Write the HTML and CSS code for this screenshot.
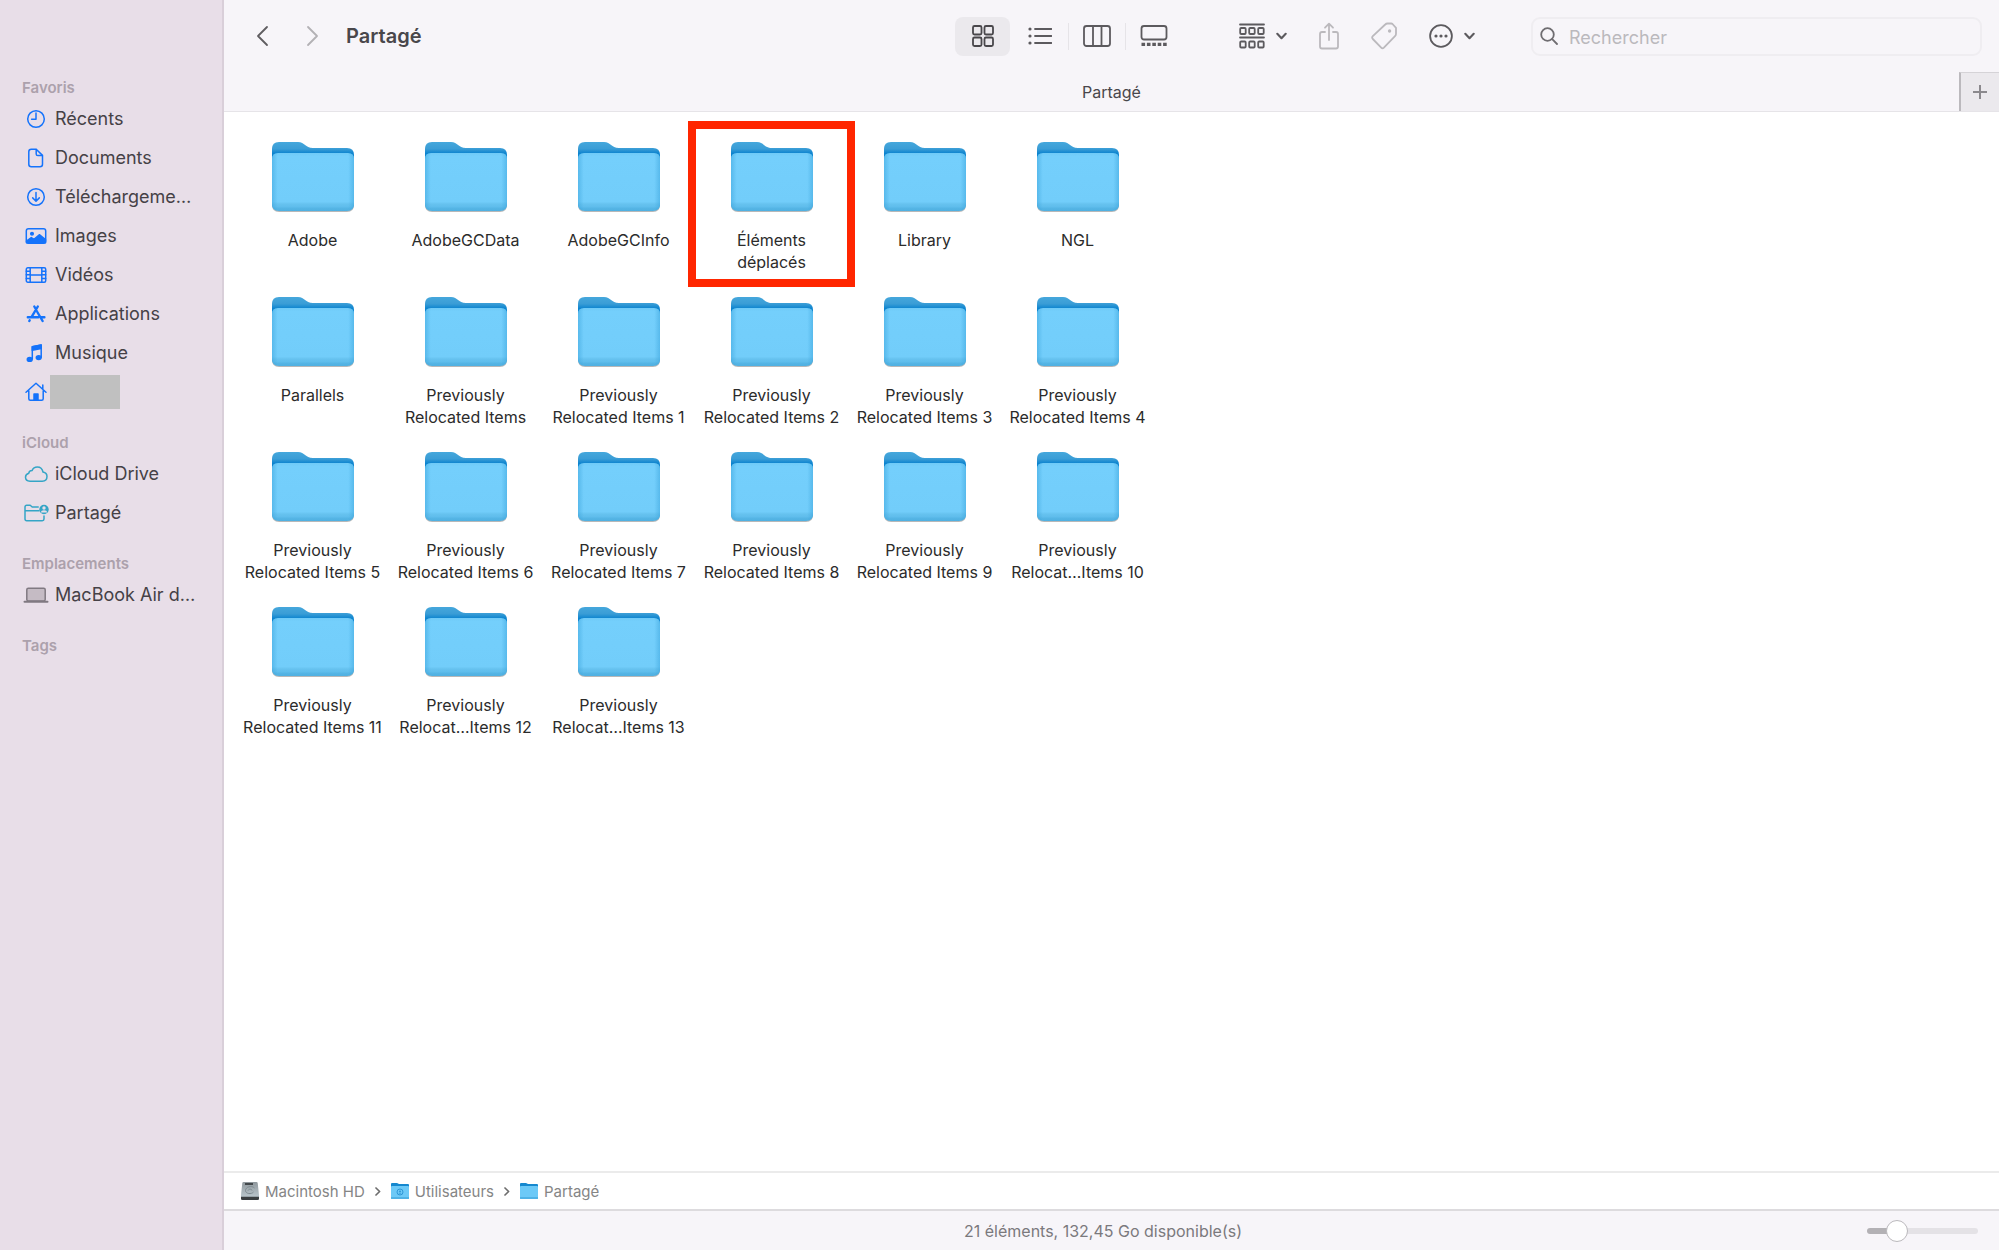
FILE: index.html
```html
<!DOCTYPE html>
<html lang="fr">
<head>
<meta charset="utf-8">
<meta name="viewport" content="width=device-width, initial-scale=1">
<title>Partagé</title>
<link rel="stylesheet" href="styles.css">
</head>
<body>
<svg class="defs" aria-hidden="true">
  <defs>
    <linearGradient id="back" x1="0" y1="0" x2="0" y2="1">
      <stop offset="0" stop-color="#45a7dc"/><stop offset=".1" stop-color="#3a9dd6"/><stop offset=".17" stop-color="#0b83cf"/><stop offset="1" stop-color="#0b83cf"/>
    </linearGradient>
    <linearGradient id="front" x1="0" y1="0" x2="0" y2="1">
      <stop offset="0" stop-color="#6fcaf7"/><stop offset=".06" stop-color="#74cffc"/><stop offset=".84" stop-color="#72cdfa"/><stop offset=".88" stop-color="#66c2ef"/><stop offset=".93" stop-color="#5fbdec"/><stop offset=".95" stop-color="#55b5e5"/><stop offset="1" stop-color="#50b0e1"/>
    </linearGradient>
    <linearGradient id="sides" x1="0" y1="0" x2="1" y2="0">
      <stop offset="0" stop-color="#3ba4dc" stop-opacity=".5"/><stop offset=".07" stop-color="#3ba4dc" stop-opacity="0"/><stop offset=".93" stop-color="#3ba4dc" stop-opacity="0"/><stop offset="1" stop-color="#3ba4dc" stop-opacity=".5"/>
    </linearGradient>
    <linearGradient id="metal" x1="0" y1="0" x2="0" y2="1">
      <stop offset="0" stop-color="#8f979c"/><stop offset="1" stop-color="#c3d0d6"/>
    </linearGradient>
  </defs>
  <symbol id="folder" viewBox="0 0 84 72">
    <path d="M1 9v54q0 7 7 7h68q7 0 7-7V16q0-8-8-8H42c-8 0-8-7-16-7H9Q1 1 1 9z" transform="translate(0 1)" fill="#000" opacity=".28"/>
    <path d="M1 8v54q0 7 7 7h68q7 0 7-7V14q0-7-7-7H42c-8 0-8-6-15-6H8Q1 1 1 8z" fill="url(#back)"/>
    <path d="M1 18q0-6 6-6h70q6 0 6 6v45q0 7-7 7H8q-7 0-7-7z" fill="url(#front)"/>
    <path d="M1 18q0-6 6-6h70q6 0 6 6v45q0 7-7 7H8q-7 0-7-7z" fill="url(#sides)"/>
  </symbol>
  <symbol id="mini-folder" viewBox="0 0 18 18">
    <path d="M0 2q0-1 1-1h5l2 1h9q1 0 1 1v13q0 1-1 1H1q-1 0-1-1z" fill="#1588cf"/>
    <path d="M0 5q0-1 1-1h16q1 0 1 1v11q0 1-1 1H1q-1 0-1-1z" fill="#6cc9f7"/>
    <path d="M0 15h18v1q0 1-1 1H1q-1 0-1-1z" fill="#4fb2e6"/>
  </symbol>
  <symbol id="down" viewBox="0 0 11 8"><path d="M1.3 1.8 5.5 6.2 9.7 1.8" fill="none" stroke="#5c5a5e" stroke-width="2.1" stroke-linecap="round" stroke-linejoin="round"/></symbol>
  <symbol id="next" viewBox="0 0 6 9"><path d="M1 1 4.6 4.5 1 8" fill="none" stroke="#6d6d6d" stroke-width="1.7" stroke-linecap="round" stroke-linejoin="round"/></symbol>
</svg>

<div class="window">
  <nav class="sidebar" aria-label="Barre latérale">
    <section>
      <h2>Favoris</h2>
      <ul>
        <li><a href="#"><svg class="side-icon" viewBox="0 0 26 22"><circle cx="13" cy="11" r="8.3"/><path d="M13 5v6.3H8.6"/></svg><span>Récents</span></a></li>
        <li><a href="#"><svg class="side-icon" viewBox="0 0 26 22"><path d="M8.3 2.2h4.9l6.3 6.2v8.9q0 2.5-2.5 2.5H8.3q-2.5 0-2.5-2.5V4.7q0-2.5 2.5-2.5z"/><path d="M13.2 2.5v4.4q0 1.7 1.7 1.7h4.3"/></svg><span>Documents</span></a></li>
        <li><a href="#"><svg class="side-icon" viewBox="0 0 26 22"><circle cx="13" cy="11" r="8.3"/><path d="M13 6.500v8.500M9.700 11.900l3.300 3.300 3.300-3.300"/></svg><span>Téléchargeme…</span></a></li>
        <li><a href="#"><svg class="side-icon" viewBox="0 0 26 22"><rect x="3.300" y="3.800" width="19.400" height="14.400" rx="2.200"/><circle class="solid" cx="9" cy="8.700" r="1.300"/><path class="solid" d="M3.500 16l4.800-3.500 2.700 1.800 5.300-4.600 6.200 5v3H3.500z"/></svg><span>Images</span></a></li>
        <li><a href="#"><svg class="side-icon" viewBox="0 0 26 22"><rect x="3.300" y="3.800" width="19.400" height="14.400" rx="1.500"/><path d="M7.200 4v14M18.800 4v14M7.200 11h11.600M3.300 7.200h3.900M3.300 10.800h3.900M3.300 14.400h3.900M18.800 7.200h3.900M18.800 10.800h3.900M18.800 14.400h3.900"/></svg><span>Vidéos</span></a></li>
        <li><a href="#"><svg class="side-icon thick" viewBox="0 0 26 22"><path d="M14.800 3.500 8.500 14.200M11.300 3.500l2.300 4M14.300 9l5.300 9M4.800 14.200h10.500M18 14.200h3.400M6.700 17.200l-.4.800"/></svg><span>Applications</span></a></li>
        <li><a href="#"><svg class="side-icon" viewBox="0 0 26 22"><path d="M9.300 17V4.700L18.200 3v12.300"/><path class="solid" d="M9.300 4.700 18.200 3v3.500L9.300 8.300z"/><ellipse class="solid" cx="6.700" cy="17.400" rx="2.400" ry="1.900"/><ellipse class="solid" cx="15.700" cy="15.600" rx="2.400" ry="1.900"/></svg><span>Musique</span></a></li>
        <li><a href="#" aria-label="Dossier de départ"><svg class="side-icon" viewBox="0 0 26 22"><path d="M3 11.200 13 2.300l10 8.900M5.800 9.500v8.200q0 1.500 1.500 1.500h11.400q1.500 0 1.500-1.500V9.500M19.800 4v4"/><path class="solid" d="M11 13h4v6h-4z"/></svg><span class="redacted"></span></a></li>
      </ul>
    </section>
    <section>
      <h2>iCloud</h2>
      <ul>
        <li><a href="#"><svg class="side-icon teal" viewBox="0 0 26 22"><path d="M7 18.300q-4.500-.2-4.500-4 0-3 3.300-4 .2-2.600 3.200-2.700 1.500-3.600 5.300-3.600 4.700 0 5.700 5 4 .8 4 4.600 0 4.500-4.800 4.700z"/></svg><span>iCloud Drive</span></a></li>
        <li><a href="#"><svg class="side-icon teal" viewBox="0 0 26 22"><path d="M21 14v3q0 1.700-1.700 1.700H3.700Q2 18.700 2 17V5q0-1.700 1.700-1.700h3.500l2 1.700h6M2 8.700h14"/><circle class="solid" cx="21" cy="7.500" r="4"/><circle class="light" cx="21" cy="6" r="1.700"/><path class="light" d="M18 10.500q0-2.300 3-2.300t3 2.300z"/></svg><span>Partagé</span></a></li>
      </ul>
    </section>
    <section>
      <h2>Emplacements</h2>
      <ul>
        <li><a href="#"><svg class="side-icon gray" viewBox="0 0 26 22"><rect x="3.800" y="4.300" width="18.400" height="12.700" rx="1.500" fill="#c5bbc4"/><path d="M1.500 17.800h23" stroke-width="2"/></svg><span>MacBook Air d…</span></a></li>
      </ul>
    </section>
    <section>
      <h2>Tags</h2>
    </section>
  </nav>

  <div class="content">
    <header class="toolbar">
      <div class="history">
        <button aria-label="Précédent"><svg width="14" height="22" viewBox="0 0 14 22"><path d="M12 2 3 11l9 9" stroke="#5f5d61"/></svg></button>
        <button aria-label="Suivant" disabled><svg width="14" height="22" viewBox="0 0 14 22"><path d="M2 2l9 9-9 9" stroke="#b3b1b5"/></svg></button>
      </div>
      <h1>Partagé</h1>
      <div class="views">
        <button class="selected" aria-label="Icônes"><svg width="24" height="24" viewBox="0 0 24 24"><rect x="2" y="2" width="8.500" height="8.500" rx="1.500"/><rect x="13.500" y="2" width="8.500" height="8.500" rx="1.500"/><rect x="2" y="13.500" width="8.500" height="8.500" rx="1.500"/><rect x="13.500" y="13.500" width="8.500" height="8.500" rx="1.500"/></svg></button>
        <button aria-label="Liste"><svg width="24" height="24" viewBox="0 0 24 24"><path d="M7 5h16.500M7 12h16.500M7 19h16.500"/><g class="dot"><circle cx="2" cy="5" r="1.600"/><circle cx="2" cy="12" r="1.600"/><circle cx="2" cy="19" r="1.600"/></g></svg></button>
        <button class="divided" aria-label="Colonnes"><svg width="28" height="24" viewBox="0 0 28 24"><rect x="1" y="2" width="26" height="20" rx="2.500"/><path d="M10 2v20M18.500 2v20"/></svg></button>
        <button class="divided" aria-label="Galerie"><svg width="28" height="24" viewBox="0 0 28 24"><rect x="1.500" y="2" width="25" height="13.500" rx="2.500"/><path d="M1.500 20.300h25.500" stroke-width="3.200" stroke-dasharray="3.600 1.800"/></svg></button>
      </div>
      <div class="actions">
        <button aria-label="Grouper"><svg width="26" height="26" viewBox="0 0 26 26"><path d="M1 1.500h24M1 14.500h24"/><g><rect x="1.200" y="5" width="5.500" height="6" rx="1"/><rect x="10.200" y="5" width="5.500" height="6" rx="1"/><rect x="19.200" y="5" width="5.500" height="6" rx="1"/><rect x="1.200" y="18.500" width="5.500" height="6" rx="1"/><rect x="10.200" y="18.500" width="5.500" height="6" rx="1"/><rect x="19.200" y="18.500" width="5.500" height="6" rx="1"/></g></svg><svg width="11" height="8"><use href="#down"/></svg></button>
        <button aria-label="Partager" disabled><svg width="20" height="28" viewBox="0 0 20 28"><path d="M6 10H3q-2 0-2 2v12.500q0 2 2 2h14q2 0 2-2V12q0-2-2-2h-3M10 18V2M6 5.700l4-4 4 4"/></svg></button>
        <button aria-label="Tags" disabled><svg width="26" height="28" viewBox="0 0 26 28"><path d="M14.200 2.500 1.800 14.200q-1.300 1.300 0 2.800l8.400 8.700q1.300 1.300 2.700 0L24 14.200q1-1 1-2.500V5.800L21.500 2q-.5-.5-1.300-.5h-3.700q-1.300 0-2.300 1z"/><circle cx="18.600" cy="9" r=".8" fill="#bbb9bd"/></svg></button>
        <button aria-label="Actions"><svg width="24" height="24" viewBox="0 0 24 24"><circle cx="12" cy="12" r="10.900"/><g class="dot"><circle cx="7" cy="12" r="1.600"/><circle cx="12" cy="12" r="1.600"/><circle cx="17" cy="12" r="1.600"/></g></svg><svg width="11" height="8"><use href="#down"/></svg></button>
      </div>
      <label class="search">
        <svg width="18" height="18" viewBox="0 0 18 18"><circle cx="7.500" cy="7.500" r="6.300"/><path d="M12.200 12.200 17 17"/></svg>
        <input type="search" placeholder="Rechercher" aria-label="Rechercher">
      </label>
    </header>

    <div class="tabs">
      <span class="tab">Partagé</span>
      <button class="new-tab" aria-label="Nouvel onglet"><svg width="16" height="16" viewBox="0 0 16 16"><path d="M8 1v14M1 8h14"/></svg></button>
    </div>

    <main>
      <ul class="files">
        <li><svg><use href="#folder"/></svg><span>Adobe</span></li>
        <li><svg><use href="#folder"/></svg><span>AdobeGCData</span></li>
        <li><svg><use href="#folder"/></svg><span>AdobeGCInfo</span></li>
        <li class="marked"><svg><use href="#folder"/></svg><span>Éléments<br>déplacés</span></li>
        <li><svg><use href="#folder"/></svg><span>Library</span></li>
        <li><svg><use href="#folder"/></svg><span>NGL</span></li>
        <li><svg><use href="#folder"/></svg><span>Parallels</span></li>
        <li><svg><use href="#folder"/></svg><span>Previously<br>Relocated Items</span></li>
        <li><svg><use href="#folder"/></svg><span>Previously<br>Relocated Items 1</span></li>
        <li><svg><use href="#folder"/></svg><span>Previously<br>Relocated Items 2</span></li>
        <li><svg><use href="#folder"/></svg><span>Previously<br>Relocated Items 3</span></li>
        <li><svg><use href="#folder"/></svg><span>Previously<br>Relocated Items 4</span></li>
        <li><svg><use href="#folder"/></svg><span>Previously<br>Relocated Items 5</span></li>
        <li><svg><use href="#folder"/></svg><span>Previously<br>Relocated Items 6</span></li>
        <li><svg><use href="#folder"/></svg><span>Previously<br>Relocated Items 7</span></li>
        <li><svg><use href="#folder"/></svg><span>Previously<br>Relocated Items 8</span></li>
        <li><svg><use href="#folder"/></svg><span>Previously<br>Relocated Items 9</span></li>
        <li><svg><use href="#folder"/></svg><span>Previously<br>Relocat…Items 10</span></li>
        <li><svg><use href="#folder"/></svg><span>Previously<br>Relocated Items 11</span></li>
        <li><svg><use href="#folder"/></svg><span>Previously<br>Relocat…Items 12</span></li>
        <li><svg><use href="#folder"/></svg><span>Previously<br>Relocat…Items 13</span></li>
      </ul>
    </main>

    <nav class="path" aria-label="Chemin">
      <a href="#"><svg width="18" height="18" viewBox="0 0 18 18"><path d="M2.500 0h13q1 0 1.200 1L18 13v3.500q0 1.500-1.500 1.500h-15Q0 18 0 16.500V13L1.300 1q.2-1 1.200-1z" fill="url(#metal)"/><path d="M0 14.800h18v1.700q0 1.500-1.500 1.500h-15Q0 18 0 16.500z" fill="#3b3f41"/><path d="M4 2h8" stroke="#43484b" stroke-width="2"/><path d="M13.500 6c-3-3-9-1-9 2.500s6 4 8 1.500M7 8.500c1-2 4-1.500 4 0" fill="none" stroke="#7f8b91"/></svg>Macintosh HD</a>
      <svg class="next" width="6" height="9"><use href="#next"/></svg>
      <a href="#"><svg width="18" height="18" viewBox="0 0 18 18"><use href="#mini-folder"/><circle cx="9" cy="10" r="3" fill="none" stroke="#2f97d6"/><circle cx="9" cy="9.500" r="1" fill="#2f97d6"/><path d="M7.300 12q1.700-1.700 3.400 0z" fill="#2f97d6"/></svg>Utilisateurs</a>
      <svg class="next" width="6" height="9"><use href="#next"/></svg>
      <a href="#"><svg width="18" height="18"><use href="#mini-folder"/></svg>Partagé</a>
    </nav>

    <footer class="status">
      <span>21 éléments, 132,45 Go disponible(s)</span>
      <input type="range" min="0" max="100" value="21" aria-label="Taille des icônes">
    </footer>
  </div>
</div>
</body>
</html>
```

FILE: styles.css
```css
* {
  box-sizing: border-box;
}

body {
  margin: 0;
  font-family: Inter, "Liberation Sans", sans-serif;
  font-size: 16px;
  color: #2b2b2b;
  background: #fff;
}

ul {
  margin: 0;
  padding: 0;
  list-style: none;
}

h1,
h2 {
  margin: 0;
}

a {
  color: inherit;
  text-decoration: none;
}

button {
  display: flex;
  align-items: center;
  justify-content: center;
  padding: 0;
  border: 0;
  background: none;
  font: inherit;
}

.defs {
  position: absolute;
  width: 0;
  height: 0;
}

.window {
  display: flex;
  min-height: 100vh;
}

/* Sidebar */
.sidebar {
  display: flex;
  flex: 0 0 224px;
  flex-direction: column;
  gap: 20px;
  padding-top: 76px;
  background: #e8dee8;
  border-right: 2px solid #d9cfd9;
}

.sidebar h2 {
  padding-left: 22px;
  font-size: 15px;
  line-height: 23px;
  font-weight: 600;
  color: #aca1ac;
}

.sidebar a {
  display: flex;
  align-items: center;
  gap: 6px;
  height: 39px;
  padding-left: 23px;
  font-size: 18px;
  white-space: nowrap;
  color: #454146;
}

.side-icon {
  flex: none;
  width: 26px;
  height: 22px;
  fill: none;
  stroke: #1573fb;
  stroke-width: 1.5;
  stroke-linecap: round;
  stroke-linejoin: round;
}

.side-icon .solid {
  fill: #1573fb;
}

.side-icon.thick {
  stroke-width: 2.4;
}

.side-icon.teal {
  stroke: #35a5c6;
}

.side-icon.teal .solid {
  fill: #35a5c6;
}

.side-icon .light {
  fill: #e8dee8;
  stroke: none;
}

.side-icon.gray {
  stroke: #807981;
}

.redacted {
  width: 70px;
  height: 34px;
  background: #c0c0c0;
  margin-left: -5px;
}

/* Toolbar */
.content {
  display: flex;
  flex: 1;
  flex-direction: column;
  min-width: 0;
}

.toolbar {
  display: flex;
  align-items: center;
  height: 72px;
  padding: 0 17px 0 31px;
  background: #f7f5f9;
}

.toolbar svg {
  fill: none;
  stroke: #5c5a5e;
  stroke-width: 1.8;
  stroke-linecap: round;
  stroke-linejoin: round;
}

.toolbar button:disabled svg {
  stroke: #bbb9bd;
}

.toolbar .dot {
  fill: #5c5a5e;
  stroke: none;
}

.history {
  display: flex;
  gap: 37px;
  margin-right: 26px;
}

.toolbar h1 {
  flex: 1;
  font-size: 20px;
  font-weight: 600;
  color: #49474b;
}

.views {
  display: flex;
  gap: 2px;
  margin-right: 58px;
}

.views button {
  position: relative;
  width: 55px;
  height: 39px;
  border-radius: 8px;
}

.views .selected {
  background: #ebe9ed;
}

.views .selected svg {
  stroke: #49474b;
}

.views .divided svg {
  stroke-linecap: butt;
}

.views .divided::before {
  content: "";
  position: absolute;
  left: -1px;
  top: 6px;
  width: 1px;
  height: 27px;
  background: #e6e4e8;
}

.actions {
  display: flex;
  gap: 32px;
  margin-right: 56px;
}

.actions button {
  gap: 11px;
}

.search {
  display: flex;
  align-items: center;
  gap: 11px;
  width: 451px;
  height: 39px;
  padding: 0 7px;
  border: 2px solid #efedf1;
  border-radius: 9px;
}

.search svg {
  flex: none;
  stroke: #6f6d71;
}

.search input {
  flex: 1;
  min-width: 0;
  padding: 2px 0 0;
  border: 0;
  outline: 0;
  background: none;
  font: inherit;
  font-size: 18px;
}

.search input::placeholder {
  color: #bbb9bd;
}

/* Tab bar */
.tabs {
  display: flex;
  align-items: stretch;
  height: 40px;
  background: #f7f5f9;
  border-bottom: 1px solid #e6e4e8;
}

.tab {
  flex: 1;
  margin-right: -40px;
  font-size: 16px;
  line-height: 40px;
  text-align: center;
  color: #49474b;
}

.new-tab {
  width: 40px;
  background: #ebe9ed;
  border-top: 1px solid #d5d3d7;
  border-left: 2px solid #bbb9bd;
}

.new-tab svg {
  stroke: #8b898d;
  stroke-width: 2;
}

/* Files */
main {
  flex: 1;
  padding: 24px 12px;
}

.files {
  display: grid;
  grid-template-columns: repeat(6, 153px);
  grid-auto-rows: 151px;
  row-gap: 4px;
}

.files li {
  position: relative;
  display: flex;
  flex-direction: column;
  align-items: center;
  gap: 16px;
  padding-top: 5px;
}

.files li svg {
  width: 84px;
  height: 72px;
}

.files span {
  line-height: 22px;
  text-align: center;
  white-space: nowrap;
}

.marked::after {
  content: "";
  position: absolute;
  inset: -15px -7px 0;
  border: 8px solid #ff2600;
}

/* Path bar */
.path {
  display: flex;
  align-items: center;
  gap: 10px;
  height: 40px;
  padding-left: 17px;
  border-top: 2px solid #ebebeb;
  border-bottom: 2px solid #dddbde;
  font-size: 15px;
  color: #858585;
}

.path a {
  display: flex;
  align-items: center;
  gap: 6px;
}

/* Status bar */
.status {
  display: grid;
  grid-template-columns: 1fr auto 1fr;
  align-items: center;
  height: 39px;
  padding: 0 21px 0 4px;
  background: #f7f5f9;
  font-size: 16px;
  color: #7b797d;
}

.status span {
  grid-column: 2;
}

.status input {
  justify-self: end;
  width: 111px;
  height: 22px;
  margin: 0;
  appearance: none;
  background: none;
}

.status input::-webkit-slider-runnable-track {
  height: 6px;
  border-radius: 3px;
  background: linear-gradient(to right, #b3b1b5 27%, #e4e2e6 27%);
}

.status input::-webkit-slider-thumb {
  appearance: none;
  width: 22px;
  height: 22px;
  margin-top: -8px;
  border: 1px solid #bbb9bd;
  border-radius: 50%;
  background: #fff;
}
```
